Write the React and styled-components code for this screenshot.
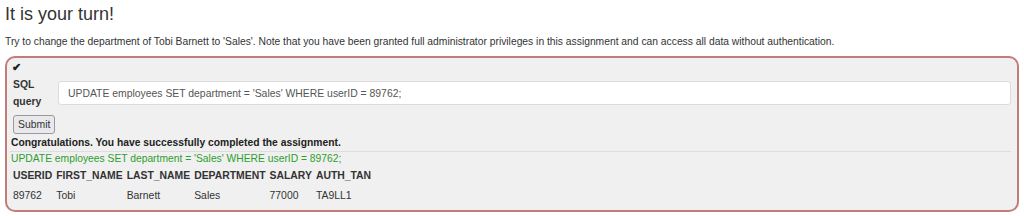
import React from 'react';
import styled, { createGlobalStyle } from 'styled-components';

const GlobalStyle = createGlobalStyle`
  html, body {
    margin: 0;
    padding: 0;
    background: #ffffff;
  }
  body {
    font-family: "Liberation Sans", Arial, Helvetica, sans-serif;
    color: #333333;
  }
`;

const Page = styled.div`
  padding: 3px 5px 0 5px;
  width: 1024px;
  height: 216px;
  box-sizing: border-box;
  overflow: hidden;
`;

const Title = styled.h3`
  margin: 0;
  font-size: 18px;
  font-weight: normal;
  line-height: 22px;
  color: #333;
`;

const Intro = styled.p`
  margin: 10px 0 0 0;
  font-size: 10.3px;
  line-height: 14px;
  color: #333;
`;

const AttackBox = styled.div`
  margin-top: 7px;
  width: 1014px;
  box-sizing: border-box;
  background: #f0f0f0;
  border: 2px solid #c27c7c;
  border-radius: 10px;
  padding: 3px 6px 4px 3px;
`;

const Check = styled.div`
  font-size: 11px;
  font-weight: bold;
  line-height: 12px;
  height: 12px;
  padding-left: 2px;
  color: #222;
`;

const QueryRow = styled.div`
  display: flex;
  align-items: center;
  margin-top: 3px;
`;

const QueryLabel = styled.label`
  width: 48px;
  padding-left: 3px;
  box-sizing: border-box;
  font-size: 10.4px;
  font-weight: bold;
  line-height: 17px;
  color: #333;
`;

const QueryInput = styled.input`
  flex: 1;
  height: 24px;
  box-sizing: border-box;
  border: 1px solid #dcdcdc;
  border-radius: 3px;
  background: #fff;
  padding: 0 9px;
  font-family: "Liberation Sans", Arial, sans-serif;
  font-size: 10.4px;
  color: #555;
  outline: none;
`;

const SubmitButton = styled.button`
  display: block;
  margin: 5px 0 0 3px;
  height: 19px;
  padding: 0 4px;
  font-family: "Liberation Sans", Arial, sans-serif;
  font-size: 10.4px;
  color: #333;
  background: #e9e9ed;
  border: 1px solid #9a9a9a;
  border-radius: 3px;
`;

const Feedback = styled.div`
  margin-top: 2px;
  padding-left: 1px;
  font-size: 10.3px;
  font-weight: bold;
  line-height: 14px;
  color: #222;
  padding-bottom: 1px;
  border-bottom: 1px solid #dddddd;
`;

const Output = styled.div`
  padding-left: 1px;
  font-size: 10.3px;
  line-height: 14px;
  color: #2e9e2e;
`;

const ResultTable = styled.table`
  border-collapse: collapse;
  margin-left: 1px;
  font-size: 10.4px;
  color: #333;
`;

const Head = styled.th`
  text-align: left;
  font-weight: bold;
  padding: 4px 2px;
  line-height: 12px;
`;

const Cell = styled.td`
  padding: 4px 2px;
  line-height: 12px;
`;

const columns = ['USERID', 'FIRST_NAME', 'LAST_NAME', 'DEPARTMENT', 'SALARY', 'AUTH_TAN'];
const rows = [['89762', 'Tobi', 'Barnett', 'Sales', '77000', 'TA9LL1']];
const query = "UPDATE employees SET department = 'Sales' WHERE userID = 89762;";

export default function App() {
  return (
    <>
      <GlobalStyle />
      <Page>
        <Title>It is your turn!</Title>
        <Intro>
          Try to change the department of Tobi Barnett to 'Sales'. Note that you have been granted full
          administrator privileges in this assignment and can access all data without authentication.
        </Intro>
        <AttackBox>
          <Check>✔</Check>
          <QueryRow>
            <QueryLabel htmlFor="query">SQL<br />query</QueryLabel>
            <QueryInput id="query" defaultValue={query} />
          </QueryRow>
          <SubmitButton>Submit</SubmitButton>
          <Feedback>Congratulations. You have successfully completed the assignment.</Feedback>
          <Output>{query}</Output>
          <ResultTable>
            <thead>
              <tr>
                {columns.map((c) => (
                  <Head key={c}>{c}</Head>
                ))}
              </tr>
            </thead>
            <tbody>
              {rows.map((r, i) => (
                <tr key={i}>
                  {r.map((v, j) => (
                    <Cell key={j}>{v}</Cell>
                  ))}
                </tr>
              ))}
            </tbody>
          </ResultTable>
        </AttackBox>
      </Page>
    </>
  );
}
